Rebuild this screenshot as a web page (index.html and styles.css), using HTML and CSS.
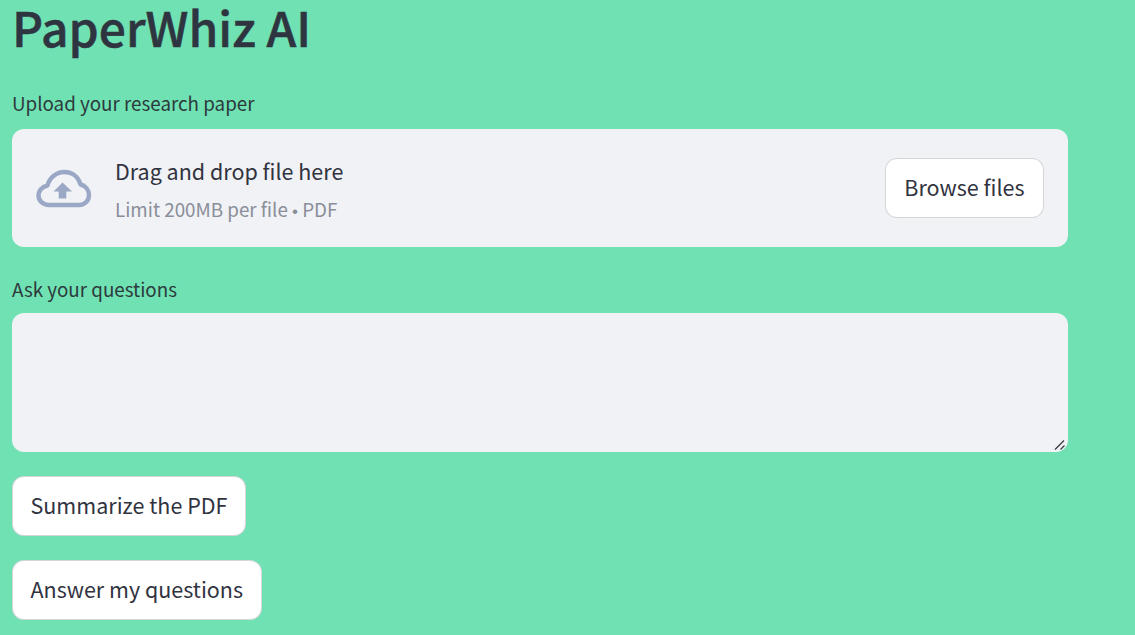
FILE: index.html
```html
<!DOCTYPE html>
<html>
<head>
	<title>PaperWhiz AI</title>
	<meta charset="utf-8">
	<link rel="stylesheet" href="styles.css">
</head>
<body>
<div class="main">
	<h1 class="title">PaperWhiz AI</h1>
	<label class="field-label upload-label">Upload your research paper</label>
	<section class="dropzone">
		<svg class="cloud" viewBox="0 0 56 40" width="56" height="40">
			<path d="M13 37C7 37 2.500 32.500 2.500 27.500C2.500 22.500 6.500 18.500 11.500 17.500C13.500 9.500 20.500 4 28.500 4C36.500 4 42.500 9 44.500 16.500C49.500 17.500 53 22 53 27C53 32.500 49 37 43 37Z" fill="none" stroke="#9aa8c6" stroke-width="4.400" stroke-linejoin="round"/>
			<path d="M26.500 14.500L36 23.500H30.300V30.500H22.700V23.500H17.500Z" fill="#9aa8c6"/>
		</svg>
		<div class="drop-text">
			<div class="drop-title">Drag and drop file here</div>
			<div class="drop-limit">Limit 200MB per file <span class="dot">•</span> PDF</div>
		</div>
		<button class="btn browse">Browse files</button>
	</section>
	<label class="field-label question-label">Ask your questions</label>
	<div class="question-box">
		<textarea class="question"></textarea>
		<svg class="grip" viewBox="0 0 12 12" width="12" height="12">
			<path d="M1 10.500L10 1.500M6.500 10.500L10.500 6.500" stroke="#3a3d45" stroke-width="1.300" fill="none"/>
		</svg>
	</div>
	<button class="btn action">Summarize the PDF</button>
	<button class="btn action">Answer my questions</button>
</div>
</body>
</html>
```

FILE: styles.css
```css
*{box-sizing:border-box;}
html,body{margin:0;padding:0;height:100%;overflow:hidden;}
body{
	background:#70e1b3;
	color:#31333f;
	font-family:"Noto Sans CJK SC","Noto Sans",sans-serif;
}
.main{
	display:flex;
	flex-direction:column;
	align-items:flex-start;
	width:1056px;
	margin-left:12px;
}
.title{
	margin:0;
	height:58px;
	font-size:48px;
	line-height:53px;
	font-weight:500;
	-webkit-text-stroke:.5px #2f3540;
	color:#2f3540;
}
.field-label{
	display:block;
	font-size:18.800px;
	line-height:24px;
	color:#2c3a3c;
}
.upload-label{margin-top:33px;margin-bottom:14px;}
.question-label{margin-top:30px;margin-bottom:12px;}
.dropzone{
	display:flex;
	align-items:center;
	width:100%;
	height:118px;
	padding:0 24px;
	background:#f0f2f6;
	border-radius:12px;
}
.cloud{flex:none;}
.drop-text{flex:1;margin-left:23px;padding-top:4px;}
.drop-title{font-size:21.500px;line-height:32px;}
.drop-limit{margin-top:8px;font-size:18.800px;line-height:28px;color:#8a8e99;}
.dot{font-family:"Liberation Sans",sans-serif;font-size:17px;}
.btn{
	display:block;
	height:60px;
	padding:0 18px 2px;
	background:#fff;
	border:1px solid rgba(49,51,63,.2);
	border-radius:12px;
	color:#31333f;
	font-family:inherit;
	font-size:21.500px;
	line-height:28px;
	white-space:nowrap;
}
.browse{padding:0 18.500px 2px;}
.action{padding:0 17.500px 2px;margin-bottom:24px;}
.question-box{
	position:relative;
	width:100%;
	height:139px;
	margin-bottom:24px;
}
.question{
	display:block;
	width:100%;
	height:100%;
	background:#f0f2f6;
	border:0;
	border-radius:12px;
	outline:none;
	resize:none;
}
.grip{position:absolute;right:2px;bottom:1px;}
```
